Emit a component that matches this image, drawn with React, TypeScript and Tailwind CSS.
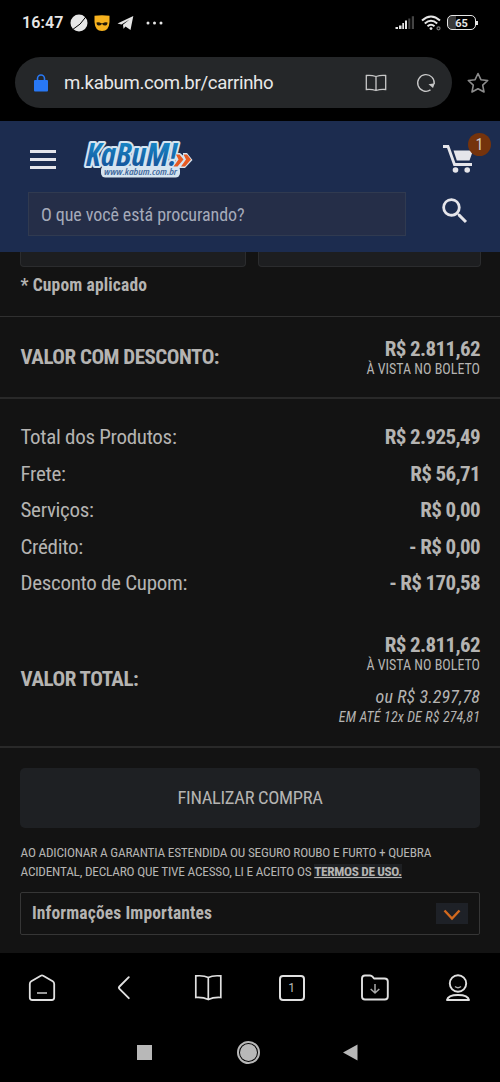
import { MdSearch } from "react-icons/md";

const totals = [
  { label: "Total dos Produtos:", value: "R$ 2.925,49" },
  { label: "Frete:", value: "R$ 56,71" },
  { label: "Serviços:", value: "R$ 0,00" },
  { label: "Crédito:", value: "- R$ 0,00" },
  { label: "Desconto de Cupom:", value: "- R$ 170,58" },
];

function StatusBar() {
  return (
    <div className="flex h-[45px] items-center justify-between pr-[22px] pl-[22px] text-[#e6e6e6]">
      <div className="flex items-center">
        <span className="w-[41px] text-[16px] font-semibold tracking-[0.1px] whitespace-nowrap">16:47</span>
        <svg className="ml-[7px] h-[18px] w-[18px]" viewBox="0 0 18 18">
          <circle cx="9" cy="9" r="8.500" fill="#e6e6e6" />
          <path d="M2 16 Q11 11 16.500 2" fill="none" stroke="#000" strokeWidth="1" />
        </svg>
        <svg className="ml-[5px] h-[18px] w-[18px]" viewBox="0 0 18 18">
          <path d="M1.500 1.800 Q9 0.500 16.500 1.800 V8 Q16 17 9 17 Q2 17 1.500 8Z" fill="#f7b21e" />
          <path d="M3.500 8.500 Q6 7.700 8.300 9.300 H9.700 Q12 7.700 14.500 8.500 Q14.500 11.500 12.300 11.500 Q10 11.500 9.500 10.300 H8.500 Q8 11.500 5.700 11.500 Q3.500 11.500 3.500 8.500Z" fill="#231a08" />
        </svg>
        <svg className="ml-[6px] h-[16px] w-[17px]" viewBox="0 0 17 16">
          <path d="M0.500 8.500 L16.300 1 L13.500 15 L8.500 11.500 L6.500 13.800 L6 9.800 L12.500 4.500 L4.500 9.400Z" fill="#e6e6e6" />
        </svg>
        <svg className="ml-[12px] h-[4px] w-[18px]" viewBox="0 0 18 4">
          <circle cx="2" cy="2" r="1.500" fill="#e6e6e6" />
          <circle cx="8.500" cy="2" r="1.500" fill="#e6e6e6" />
          <circle cx="15" cy="2" r="1.500" fill="#e6e6e6" />
        </svg>
      </div>
      <div className="flex items-center">
        <svg className="h-[15px] w-[20px]" viewBox="0 0 20 15">
          <path d="M0.500 12H3V14H0.500ZM4 10.500H6.500V14H4ZM7.300 8H9V14H7.300ZM10 5.500H12V14H10Z" fill="#e6e6e6" />
          <path d="M13.300 3.500H15.300V14H13.300ZM16.800 1.200H19V14H16.800Z" fill="#444" />
        </svg>
        <svg className="ml-[6px] h-[16px] w-[21px]" viewBox="0 0 21 16" fill="none" stroke="#e6e6e6" strokeWidth="2">
          <path d="M1 5.500 Q10 -2.500 19 5.500M3.800 8.600 Q10 3 16.200 8.600M6.500 11.300 Q10 8.300 13.500 11.300" />
          <circle cx="10" cy="13.600" r="1.400" fill="#e6e6e6" stroke="none" />
          <circle cx="17.500" cy="13.300" r="1.500" stroke="#777" strokeWidth="1.200" />
        </svg>
        <div className="ml-[5px] flex h-[15px] w-[29px] items-center justify-center rounded-[5px] border-[1.5px] border-[#e6e6e6] bg-gradient-to-r from-[#3a3a3a] from-30% to-black to-30% pt-[2px] text-[11px] leading-[11px] font-bold">
          65
        </div>
        <div className="h-[4px] w-[2px] bg-[#e6e6e6]" />
      </div>
    </div>
  );
}

function AddressBar() {
  return (
    <div className="flex h-[76px] items-start pt-[12px] pl-[15px]">
      <div className="flex h-[51px] w-[437px] items-center rounded-full bg-[#252729] pl-[18px]">
        <svg className="h-[18px] w-[16px]" viewBox="0 0 16 18">
          <rect x="1" y="6" width="14" height="11.500" rx="1" fill="#2878f5" />
          <path d="M4.500 7V4.500a3.500 3.500 0 0 1 7 0V7" fill="none" stroke="#2878f5" strokeWidth="1.600" />
        </svg>
        <span className="mt-[2px] ml-[15px] w-[301px] text-[18.600px] tracking-[-0.320px] whitespace-nowrap text-[#e8e8e8]">
          m.kabum.com.br/carrinho
        </span>
        <svg className="h-[18px] w-[22px]" viewBox="0 0 22 18" fill="none" stroke="#c8c8c8" strokeWidth="1.300">
          <path d="M11 2.500 Q6 0.800 1.300 1.500V15.500Q6 14.800 11 16.500Q16 14.800 20.700 15.500V1.500Q16 0.800 11 2.500ZM11 2.500V16.500" />
        </svg>
        <svg className="ml-[29px] h-[20px] w-[20px]" viewBox="0 0 20 20">
          <path d="M14.500 16.900 A8.300 8.300 0 1 1 18.200 11" fill="none" stroke="#c8c8c8" strokeWidth="1.300" />
          <path d="M12.500 11.200 L18.800 10.300 L17 15Z" fill="#c8c8c8" />
        </svg>
      </div>
      <svg className="mt-[15px] ml-[15px] h-[22px] w-[22px]" viewBox="0 0 22 22" fill="none" stroke="#8c8c8c" strokeWidth="1.600" strokeLinejoin="round">
        <path d="M11 1.500 L13.900 7.700 L20.700 8.500 L15.700 13.200 L17 20 L11 16.700 L5 20 L6.300 13.200 L1.300 8.500 L8.100 7.700Z" />
      </svg>
    </div>
  );
}

function Logo() {
  return (
    <svg className="h-[46px] w-[116px] overflow-visible" viewBox="0 -2 116 46">
      <defs>
        <linearGradient id="kabum" x1="0" y1="0" x2="0" y2="1">
          <stop offset="0.2" stopColor="#1689c8" />
          <stop offset="0.9" stopColor="#154d94" />
        </linearGradient>
      </defs>
      <rect x="20" y="27.500" width="79" height="12" rx="4.500" fill="#d5e4f0" />
      <path d="M93 15h6l3 2.500V15h4l5.500 7-7.500 8H91l4-8Z" fill="#d5e4f0" />
      <text
        x="5"
        y="28"
        fontFamily="Open Sans, sans-serif"
        fontStyle="italic"
        fontWeight="700"
        fontSize="32"
        textLength="91"
        lengthAdjust="spacingAndGlyphs"
        fill="url(#kabum)"
        stroke="#d5e4f0"
        strokeWidth="4"
        strokeLinejoin="round"
        paintOrder="stroke"
      >
        KaBuM!
      </text>
      <path d="M95 16.500h3.500l4 5-6 7h-4l5-7ZM102.500 16.500h3.500l4 5-6 7h-4l5-7Z" fill="#e65a22" />
      <text x="23" y="37" fontFamily="Open Sans, sans-serif" fontStyle="italic" fontWeight="600" fontSize="9" textLength="73" lengthAdjust="spacingAndGlyphs" fill="#3f689c">
        www.kabum.com.br
      </text>
    </svg>
  );
}

function Header() {
  return (
    <header className="h-[131px] bg-[#1c2c4f]">
      <div className="flex h-[71px] items-center pt-[5px] pl-[30px]">
        <div className="mt-[1px] flex w-[26px] flex-col gap-[5px]">
          <div className="h-[3px] bg-[#e5e5ea]" />
          <div className="h-[3px] bg-[#e5e5ea]" />
          <div className="h-[3px] bg-[#e5e5ea]" />
        </div>
        <div className="ml-[25px] flex w-[361px]">
          <Logo />
        </div>
        <div className="relative h-[34px] w-[34px]">
          <svg className="h-[34px] w-[34px]" viewBox="0 0 34 34" fill="#e5e5ea">
            <path d="M1 4.500H6L12.500 22.500H30" fill="none" stroke="#e5e5ea" strokeWidth="2.800" />
            <path d="M11.500 8.500H31L27.500 18.500H14.800Z" />
            <circle cx="13.500" cy="28" r="2.800" />
            <circle cx="25.200" cy="28" r="2.800" />
          </svg>
          <span className="absolute -top-[9px] left-[26px] flex h-[23px] w-[23px] items-center justify-center rounded-full bg-[#75330c] text-[16px] text-[#ccc]">
            1
          </span>
        </div>
      </div>
      <div className="flex items-start pl-[28px]">
        <div className="flex h-[44px] w-[378px] items-center border border-[#303a50] bg-[#252e48] pl-[12px] text-[18px] tracking-[-0.080px] text-[#a5abba]">
          O que você está procurando?
        </div>
        <MdSearch className="mt-[2px] ml-[32px] h-[34px] w-[34px] text-[#e5e5ea]" />
      </div>
    </header>
  );
}

function Summary() {
  return (
    <main className="h-[701px] bg-[#131313] text-[#b5b4b2]">
      <div className="flex gap-[12px] pl-[20px]">
        <div className="h-[15px] w-[226px] rounded-b border border-t-0 border-[#2b2c2e] bg-[#1d1e20]" />
        <div className="h-[15px] w-[223px] rounded-b border border-t-0 border-[#2b2c2e] bg-[#1d1e20]" />
      </div>
      <div className="flex h-[50px] items-start border-b border-[#303030] px-[20.500px] pt-[6px] text-[17.500px] leading-[24px] font-bold tracking-[0.140px]">
        * Cupom aplicado
      </div>

      {/* VALOR COM DESCONTO */}
      <div className="flex h-[82px] items-center justify-between border-b-2 border-[#292929] pr-[20px] pl-[20.500px] pt-[2px]">
        <span className="text-[21px] font-bold tracking-[-0.500px]">VALOR COM DESCONTO:</span>
        <div className="text-right">
          <div className="text-[21px] leading-[22px] font-bold tracking-[-0.620px]">R$ 2.811,62</div>
          <div className="text-[14px] leading-[18px]">À VISTA NO BOLETO</div>
        </div>
      </div>

      {/* TOTAIS */}
      <div className="pt-[20.500px] pr-[20px] pl-[20.500px]">
        {totals.map((row) => (
          <div key={row.label} className="flex h-[36.500px] items-center justify-between text-[21px]">
            <span className="tracking-[-0.300px]">{row.label}</span>
            <span className="font-bold tracking-[-0.620px]">{row.value}</span>
          </div>
        ))}
      </div>

      {/* VALOR TOTAL */}
      <div className="flex h-[146px] items-center justify-between border-b-2 border-[#292929] pt-[11px] pr-[20px] pl-[20.500px]">
        <span className="text-[21px] font-bold tracking-[-0.450px]">VALOR TOTAL:</span>
        <div className="text-right">
          <div className="text-[21px] leading-[22px] font-bold tracking-[-0.620px]">R$ 2.811,62</div>
          <div className="text-[14px] leading-[18px]">À VISTA NO BOLETO</div>
          <div className="mt-[12px] text-[18px] leading-[22px] tracking-[0.100px] italic">ou R$ 3.297,78</div>
          <div className="text-[14px] leading-[18px] tracking-[0.150px] italic">EM ATÉ 12x DE R$ 274,81</div>
        </div>
      </div>

      <div className="px-[20px] pt-[20px]">
        <button className="flex h-[60px] w-full items-center justify-center rounded-[5px] bg-[#1e2023] pt-[1px] text-[18.500px] tracking-[-0.320px]">
          FINALIZAR COMPRA
        </button>
        <p className="pt-[15px] pl-[0.500px] text-[13.300px] leading-[19px] tracking-[-0.210px] whitespace-nowrap">
          AO ADICIONAR A GARANTIA ESTENDIDA OU SEGURO ROUBO E FURTO + QUEBRA
          <br />
          ACIDENTAL, DECLARO QUE TIVE ACESSO, LI E ACEITO OS{" "}
          <a className="bg-[#1e2023] font-bold tracking-[-0.350px] underline">TERMOS DE USO.</a>
        </p>
        <div className="mt-[11px] flex h-[43px] items-center justify-between rounded-[2px] border border-[#363636] pr-[11px] pl-[11px] text-[17.500px] font-bold tracking-[0.130px]">
          Informações Importantes
          <div className="flex h-[21px] w-[32px] items-center justify-center bg-[#1e2127]">
            <svg className="mt-[3px] h-[12px] w-[18px]" viewBox="0 0 18 12" fill="none" stroke="#d2691e" strokeWidth="2.400">
              <path d="M1.500 1.500 L9 9.500 L16.500 1.500" />
            </svg>
          </div>
        </div>
      </div>
    </main>
  );
}

function BrowserNav() {
  return (
    <nav className="grid h-[69px] grid-cols-6 place-items-center text-[#e0e0e0]">
      <svg className="h-[28px] w-[28px]" viewBox="0 0 28 28" fill="none" stroke="currentColor" strokeWidth="1.800" strokeLinejoin="round">
        <path d="M12.800 1.700 L3.300 7.300 Q1.800 8.300 1.800 10 V23.500 Q1.800 26 4.300 26 H23.700 Q26.200 26 26.200 23.500 V10 Q26.200 8.300 24.700 7.300 L15.200 1.700 Q14 1 12.800 1.700Z" />
        <path d="M9 19H19" stroke="#aaa" />
      </svg>
      <svg className="h-[28px] w-[28px]" viewBox="0 0 28 28" fill="none" stroke="currentColor" strokeWidth="1.900" strokeLinecap="round">
        <path d="M17.800 3.200 L8.500 12.500 Q7.300 13.700 8.500 14.900 L17.800 24.200" />
      </svg>
      <svg className="h-[28px] w-[28px]" viewBox="0 0 28 28" fill="none" stroke="currentColor" strokeWidth="1.700">
        <path d="M14.300 3.500 Q10 1.200 1.800 1.900V23.500Q9 23 14.300 25.500Q19.500 23 26.800 23.500V1.900Q18.500 1.200 14.300 3.500ZM14.300 3.500V25.500" />
      </svg>
      <div className="flex h-[26px] w-[26px] items-center justify-center rounded-[4px] border-2 border-[#e0e0e0] text-[12px] text-[#bbb]">
        1
      </div>
      <svg className="h-[28px] w-[28px]" viewBox="0 0 28 28" fill="none" stroke="currentColor" strokeWidth="1.900" strokeLinejoin="round">
        <path d="M1 4.500 Q1 1.500 4 1.500 H9 Q10.500 1.500 11.500 2.700 L13 4.500 H23.500 Q26.800 4.500 26.800 7.500 V22.500 Q26.800 25.500 23.800 25.500 H4 Q1 25.500 1 22.500Z" />
        <path d="M14 10V18.500M9.700 15 L14 19 L18.300 15" stroke="#aaa" strokeWidth="1.500" />
      </svg>
      <svg className="h-[28px] w-[28px]" viewBox="0 0 28 28" fill="none" stroke="currentColor" strokeWidth="1.900" strokeLinejoin="round">
        <circle cx="14" cy="9.500" r="8.200" />
        <path d="M11 12.500 Q14 15 17 12.500" stroke="#aaa" strokeWidth="1.400" />
        <path d="M3 26 Q4 21 14 21 Q24 21 25 26Z" />
      </svg>
    </nav>
  );
}

function AndroidNav() {
  return (
    <div className="flex h-[60px] items-center justify-between pr-[142px] pl-[137px]">
      <div className="h-[15px] w-[15px] bg-[#b8b8b8]" />
      <div className="ml-[1px] flex h-[23px] w-[23px] items-center justify-center rounded-full border-2 border-[#b8b8b8]">
        <div className="h-[17px] w-[17px] rounded-full bg-[#b8b8b8]" />
      </div>
      <svg className="h-[17px] w-[15px]" viewBox="0 0 15 17">
        <path d="M0 8.500 L14.500 0.500V16.500Z" fill="#b8b8b8" />
      </svg>
    </div>
  );
}

export default function App() {
  return (
    <div className="h-[1082px] w-[500px] overflow-hidden bg-black font-['Roboto',sans-serif]">
      <StatusBar />
      <AddressBar />
      <div className="font-['Roboto_Condensed','Roboto',sans-serif] [font-stretch:75%]">
        <Header />
        <Summary />
      </div>
      <BrowserNav />
      <AndroidNav />
    </div>
  );
}
